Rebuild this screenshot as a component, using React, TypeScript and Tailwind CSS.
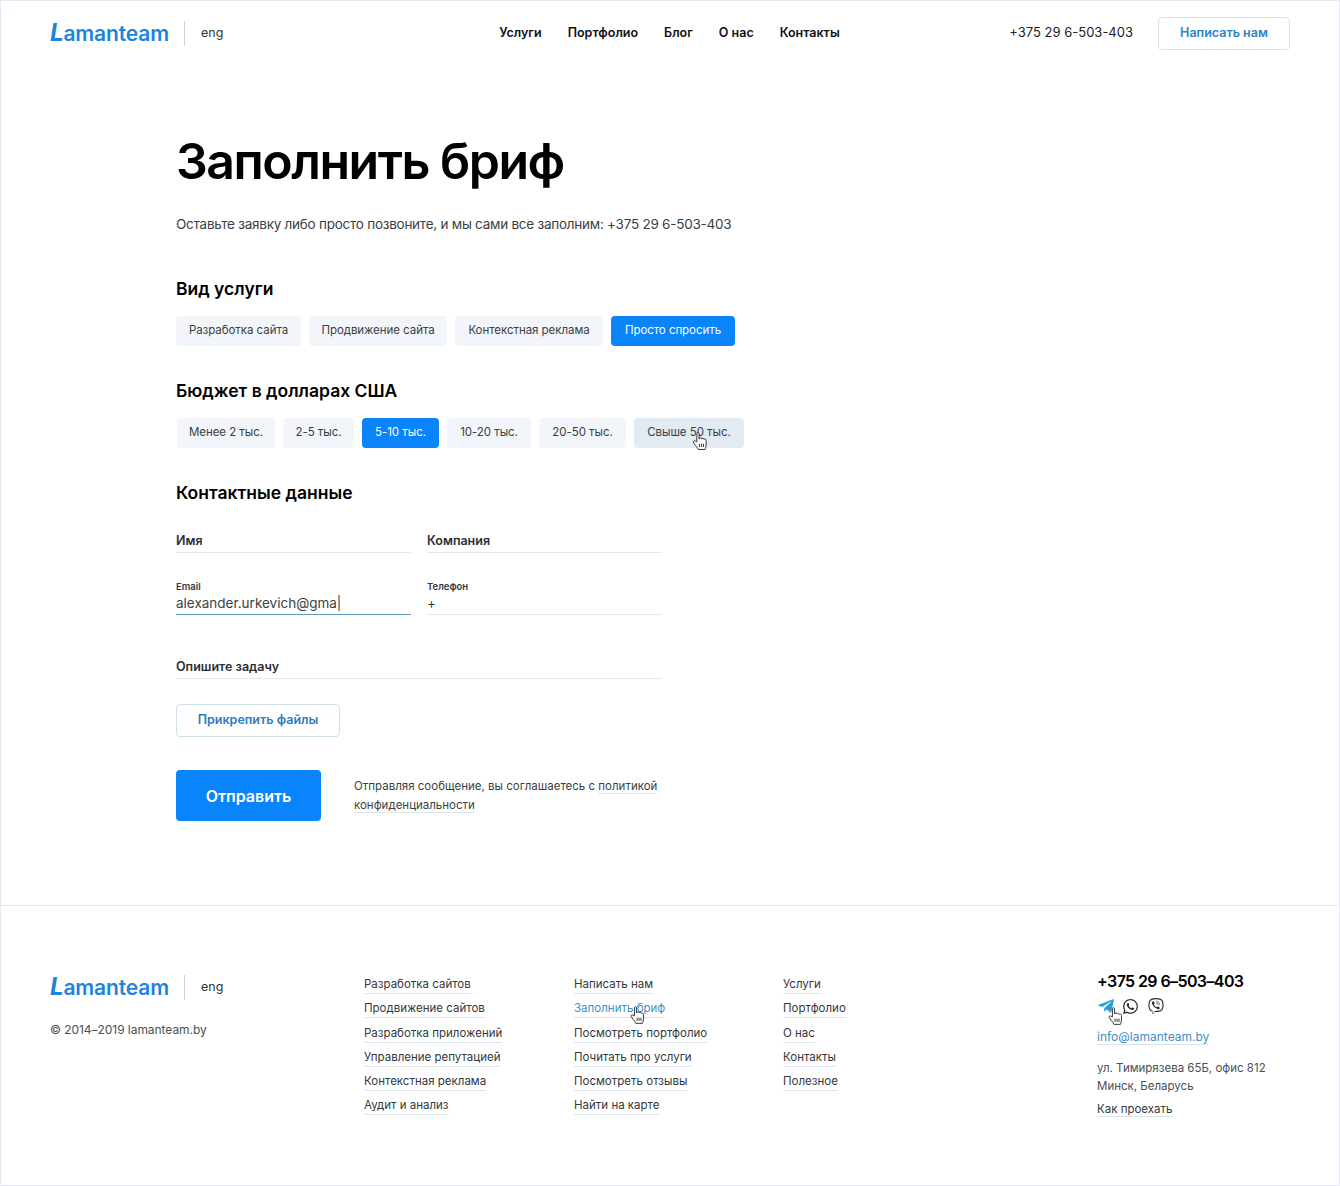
import { FaTelegramPlane, FaViber, FaWhatsapp } from "react-icons/fa";

const Logo = () => (
  <div className="flex items-center">
    <div className="w-[118px] text-[21px] leading-[28px] font-semibold tracking-[-0.15px] text-[#1b84de] whitespace-nowrap">
      <span className="italic font-bold text-[24px]">L</span>amanteam
    </div>
    <div className="w-px h-[25px] bg-[#c9d2da] ml-[16px]" />
    <div className="ml-[16px] text-[12.5px] text-[#333]">eng</div>
  </div>
);

const Hand = ({ className }: { className: string }) => (
  <svg viewBox="0 0 18 22" className={className} fill="#fff" stroke="#222" strokeWidth="1" strokeLinejoin="round">
    <path d="M5 12V2.8C5 1.2 7.4 1.2 7.4 2.8V8.6L8 8.4C8.2 7 10.2 7 10.4 8.6C10.8 7.6 12.6 7.8 12.8 9.2C13.4 8.4 15.2 8.8 15.2 10.4V15.4C15.2 17.6 14.4 18.6 14 20.4H6.6C6 18.4 4.8 17.6 3.4 15.8L1.4 13C.6 11.6 2.2 10.2 3.4 11.2Z" />
    <path d="M8 14v3.6M10.2 14v3.6M12.4 14v3.6" fill="none" />
  </svg>
);

const Chip = ({ label, width, active, hover }: { label: string; width: string; active?: boolean; hover?: boolean }) => (
  <div
    className={`relative h-[30px] ${width} flex items-center justify-center rounded-[4px] text-[11.5px] tracking-[-0.05px] whitespace-nowrap ${
      active ? "bg-[#0a84fb] text-white" : hover ? "bg-[#e2eaf2] text-[#3a3f44]" : "bg-[#f2f5f9] text-[#3a3f44]"
    }`}
  >
    {label}
    {hover && <Hand className="absolute left-[58px] top-[13px] w-[17px] h-[20px]" />}
  </div>
);

const Field = ({ label, small, value, focus, wide }: { label: string; small?: boolean; value?: string; focus?: boolean; wide?: boolean }) => (
  <div className={`${wide ? "w-[486px]" : "w-[235px]"} ${focus ? "border-b-[1.5px] border-[#5a9cc5]" : "border-b border-[#dfeaee]"}`}>
    {small ? (
      <>
        <div className="text-[9.5px] leading-[12px] font-semibold text-[#33383c]">{label}</div>
        <div className="text-[13.5px] leading-[20px] h-[21px] text-[#3a3f44]">{value}</div>
      </>
    ) : (
      <div className="text-[12.5px] leading-[18px] pt-[1px] pb-[2px] font-semibold text-[#2c3034]">{label}</div>
    )}
  </div>
);

const FooterLink = ({ label, blue, cursor }: { label: string; blue?: boolean; cursor?: boolean }) => (
  <div className="h-[24.3px] flex items-start">
    <span className={`relative text-[11.5px] leading-[17px] border-b border-[#dde5ea] whitespace-nowrap ${blue ? "text-[#3d8fc4]" : "text-[#33383c]"}`}>
      {label}
      {cursor && <Hand className="absolute left-[56px] top-[5px] w-[16px] h-[20px]" />}
    </span>
  </div>
);

const services = [
  { label: "Разработка сайта", width: "w-[125px]" },
  { label: "Продвижение сайта", width: "w-[138px]" },
  { label: "Контекстная реклама", width: "w-[148px]" },
];
const budgets = [
  { label: "Менее 2 тыс.", width: "w-[98px]" },
  { label: "2-5 тыс.", width: "w-[71px]" },
  { label: "5-10 тыс.", width: "w-[77px]" },
  { label: "10-20 тыс.", width: "w-[84px]" },
  { label: "20-50 тыс.", width: "w-[87px]" },
  { label: "Свыше 50 тыс.", width: "w-[110px]" },
];
const col1 = ["Разработка сайтов", "Продвижение сайтов", "Разработка приложений", "Управление репутацией", "Контекстная реклама", "Аудит и анализ"];
const col2 = ["Написать нам", "Заполнить бриф", "Посмотреть портфолио", "Почитать про услуги", "Посмотреть отзывы", "Найти на карте"];
const col3 = ["Услуги", "Портфолио", "О нас", "Контакты", "Полезное"];
const nav = ["Услуги", "Портфолио", "Блог", "О нас", "Контакты"];

export default function App() {
  return (
    <div className="w-[1340px] h-[1186px] bg-white border border-[#e3e8f4] font-['Inter',sans-serif] text-[#111] overflow-hidden flex flex-col">
      <header className="h-[65px] shrink-0 px-[49px] pb-[1px] grid grid-cols-[1fr_auto_1fr] items-center">
        <Logo />
        <nav className="-ml-px flex gap-[26px] text-[12.5px] font-semibold text-[#111]">
          {nav.map((n) => (
            <span key={n}>{n}</span>
          ))}
        </nav>
        <div className="flex items-center justify-end">
          <span className="text-[13px] text-[#222] mr-[25px]">+375 29 6-503-403</span>
          <div className="w-[132px] h-[33px] border border-[#d5e2ea] rounded-[4px] flex items-center justify-center text-[12.5px] font-semibold text-[#2b84c9]">
            Написать нам
          </div>
        </div>
      </header>

      <main className="h-[840px] shrink-0 border-b border-[#e3e8ee] pl-[175px] flex flex-col items-start">
        <h1 className="mt-[60px] text-[50px] leading-[70px] font-semibold tracking-[-1.5px] text-black">Заполнить бриф</h1>
        <p className="mt-[18px] text-[13.5px] leading-[20px] tracking-[-0.25px] text-[#3a3f44]">
          Оставьте заявку либо просто позвоните, и мы сами все заполним: +375 29 6-503-403
        </p>

        <h2 className="mt-[43px] text-[17.5px] leading-[24px] font-semibold text-black">Вид услуги</h2>
        <div className="mt-[15px] flex gap-[8px]">
          {services.map((s) => (
            <Chip key={s.label} label={s.label} width={s.width} />
          ))}
          <Chip label="Просто спросить" width="w-[124px]" active />
        </div>

        <h2 className="mt-[33px] text-[17.5px] leading-[24px] font-semibold text-black">Бюджет в долларах США</h2>
        <div className="mt-[15px] ml-px flex gap-[8px]">
          {budgets.map((b) => (
            <Chip key={b.label} label={b.label} width={b.width} active={b.label === "5-10 тыс."} hover={b.label === "Свыше 50 тыс."} />
          ))}
        </div>

        <h2 className="mt-[33px] text-[17.5px] leading-[24px] font-semibold text-black">Контактные данные</h2>

        <div className="mt-[26px] flex gap-[16px]">
          <Field label="Имя" />
          <Field label="Компания" />
        </div>
        <div className="mt-[28px] flex gap-[16px]">
          <Field label="Email" small value="alexander.urkevich@gma|" focus />
          <Field label="Телефон" small value="+" />
        </div>
        <div className="mt-[42px]">
          <Field label="Опишите задачу" wide />
        </div>

        <div className="mt-[25px] w-[164px] h-[33px] border border-[#cfe0e8] rounded-[4px] flex items-center justify-center text-[12.5px] font-semibold text-[#2b7cc0]">
          Прикрепить файлы
        </div>

        <div className="mt-[33px] flex items-center">
          <div className="w-[145px] h-[51px] bg-[#0a84fb] rounded-[4px] flex items-center justify-center text-[16px] font-semibold text-white">
            Отправить
          </div>
          <p className="ml-[33px] w-[320px] text-[11.5px] leading-[18.5px] text-[#3a3f44]">
            Отправляя сообщение, вы соглашаетесь с{" "}
            <span className="border-b border-[#dde5ea]">политикой</span>{" "}
            <span className="border-b border-[#dde5ea]">конфиденциальности</span>
          </p>
        </div>
      </main>

      <footer className="flex-1 pl-[49px] pt-[69px] flex items-start">
        <div className="w-[314px] -mt-[2px]">
          <Logo />
          <div className="mt-[19px] text-[12px] tracking-[-0.05px] text-[#4a4f54]">© 2014–2019 lamanteam.by</div>
        </div>
        <div className="w-[210px] pt-px">
          {col1.map((l) => (
            <FooterLink key={l} label={l} />
          ))}
        </div>
        <div className="w-[209px] pt-px">
          {col2.map((l) => (
            <FooterLink key={l} label={l} blue={l === "Заполнить бриф"} cursor={l === "Заполнить бриф"} />
          ))}
        </div>
        <div className="w-[314px] pt-px">
          {col3.map((l) => (
            <FooterLink key={l} label={l} />
          ))}
        </div>
        <div className="-mt-[6px]">
          <div className="text-[16px] leading-[24px] font-semibold tracking-[-0.6px] text-black whitespace-nowrap">+375 29 6–503–403</div>
          <div className="mt-[4px] flex items-center h-[18px] relative">
            <FaTelegramPlane className="w-[18px] h-[18px] text-[#2a9fd8]" />
            <FaWhatsapp className="ml-[7px] w-[17px] h-[17px] text-[#2a2a2a]" />
            <FaViber className="ml-[9px] w-[16px] h-[16px] text-[#2a2a2a]" />
            <Hand className="absolute left-[11px] top-[9px] w-[16px] h-[20px]" />
          </div>
          <div className="mt-[13px] text-[12px] leading-[17px] text-[#3d8fc4]">
            <span className="border-b border-[#dde5ea]">info@lamanteam.by</span>
          </div>
          <div className="mt-[14px] text-[11.5px] leading-[18px] text-[#4a4f54]">
            ул. Тимирязева 65Б, офис 812
            <br />
            Минск, Беларусь
          </div>
          <div className="mt-[6px] text-[11.5px] leading-[17px] text-[#33383c]">
            <span className="border-b border-[#dde5ea]">Как проехать</span>
          </div>
        </div>
      </footer>
    </div>
  );
}
